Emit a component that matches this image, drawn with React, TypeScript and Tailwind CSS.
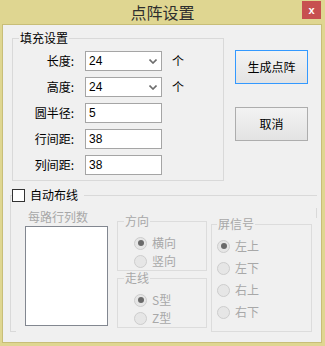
import React from "react";

const cjk = "font-['Noto_Sans_CJK_SC','Liberation_Sans',sans-serif]";

type RadioProps = {
  label: string;
  checked?: boolean;
};

function Radio({ label, checked }: RadioProps) {
  return (
    <div className="flex items-center h-[14px]">
      <span
        className="
          w-[13px]
          h-[13px]
          rounded-full
          border
          border-[#cdcdcd]
          bg-[#e6e6e6]
          flex
          items-center
          justify-center
        "
      >
        {checked && <span className="w-[6px] h-[6px] rounded-full bg-[#6a6a6a]" />}
      </span>
      <span className="ml-[5px] text-[12px] leading-[14px] text-[#a8a8a8]">{label}</span>
    </div>
  );
}

function Chevron() {
  return (
    <svg width="8" height="5" viewBox="0 0 8 5" className="mr-[4px]">
      <path d="M0.5 0.5 L4 4 L7.5 0.5" fill="none" stroke="#6d6d6d" strokeWidth="1.6" />
    </svg>
  );
}

type FieldRowProps = {
  label: string;
  value: string;
  select?: boolean;
};

function FieldRow({ label, value, select }: FieldRowProps) {
  return (
    <div className="flex items-center h-[20px]">
      <span className="w-[61px] text-right text-[12px] text-black">{label}</span>
      <div
        className="
          ml-[11px]
          w-[77px]
          h-[20px]
          border
          border-[#a5a5a5]
          bg-white
          flex
          items-center
          justify-between
        "
      >
        <span className="pl-[3px] text-[12px] font-['Liberation_Sans',sans-serif] text-black leading-none">
          {value}
        </span>
        {select && <Chevron />}
      </div>
      {select && <span className="ml-[10px] text-[12px] text-black">个</span>}
    </div>
  );
}

export default function App() {
  return (
    <div className={`w-[325px] h-[346px] bg-[#dfd691] flex flex-col ${cjk}`}>

      {/* TITLE BAR */}
      <div className="relative h-[24px] flex items-center justify-center">
        <span className="text-[16px] leading-none text-[#2e2e2e]">点阵设置</span>
        <div
          className="
            absolute
            right-[4px]
            top-[1px]
            w-[19px]
            h-[18px]
            bg-[#c75050]
            flex
            items-center
            justify-center
            text-white
            text-[11px]
            font-bold
            font-['Liberation_Sans',sans-serif]
            leading-none
          "
        >
          x
        </div>
      </div>

      {/* CLIENT AREA */}
      <div
        className="
          ml-[2px]
          w-[320px]
          h-[319px]
          border
          border-[#c8be78]
          bg-[#f0f0f0]
          pl-[7px]
          pt-[6px]
        "
      >

        {/* TOP SECTION */}
        <div className="flex items-start">
          <fieldset className="ml-[2px] w-[212px] border border-[#d9d9d9] pb-[5px]">
            <legend className="ml-[6px] px-[1px] text-[12px] leading-[14px] text-black">填充设置</legend>
            <div className="flex flex-col gap-[6px] pt-[6px]">
              <FieldRow label="长度:" value="24" select />
              <FieldRow label="高度:" value="24" select />
              <FieldRow label="圆半径:" value="5" />
              <FieldRow label="行间距:" value="38" />
              <FieldRow label="列间距:" value="38" />
            </div>
          </fieldset>

          <div className="ml-[11px] mt-[19px] flex flex-col gap-[23px]">
            <button
              className="
                w-[73px]
                h-[34px]
                border
                border-[#3399ff]
                bg-gradient-to-b
                from-[#f3f3f3]
                to-[#e3e3e3]
                text-[12px]
                text-black
              "
            >
              生成点阵
            </button>
            <button
              className="
                w-[73px]
                h-[34px]
                border
                border-[#adadad]
                bg-gradient-to-b
                from-[#f3f3f3]
                to-[#e3e3e3]
                text-[12px]
                text-black
              "
            >
              取消
            </button>
          </div>
        </div>

        {/* AUTO ROUTING */}
        <fieldset className="relative mt-[7px] w-[307px] h-[144px] border-l border-t border-[#d9d9d9]">
          <legend className="ml-[1px]">
            <div className="flex items-center gap-[5px] pr-[6px] h-[14px]">
              <span className="w-[13px] h-[13px] border border-[#333333] bg-white" />
              <span className="text-[12px] leading-[14px] text-black">自动布线</span>
            </div>
          </legend>
          <span className="absolute right-0 top-[6px] w-px h-[10px] bg-[#d9d9d9]" />
          <span className="absolute left-0 bottom-0 w-[5px] h-px bg-[#d9d9d9]" />

          <div className="flex items-start">

            {/* LIST */}
            <div className="ml-[14px] mt-[8px] flex flex-col">
              <span className="pl-[3px] text-[12px] leading-[14px] text-[#a8a8a8]">每路行列数</span>
              <div className="mt-[2px] w-[83px] h-[100px] border border-[#828790] bg-white" />
            </div>

            {/* DIRECTION + ROUTE */}
            <div className="ml-[9px] mt-[12px] flex flex-col">
              <fieldset className="w-[90px] border border-[#dcdcdc] pb-[2px]">
                <legend className="ml-[6px] px-[1px] text-[12px] leading-[14px] text-[#a8a8a8]">方向</legend>
                <div className="pl-[16px] pt-[8px] flex flex-col gap-[4px]">
                  <Radio label="横向" checked />
                  <Radio label="竖向" />
                </div>
              </fieldset>
              <fieldset className="w-[90px] border border-[#dcdcdc] pb-[2px]">
                <legend className="ml-[6px] px-[1px] text-[12px] leading-[14px] text-[#a8a8a8]">走线</legend>
                <div className="pl-[16px] pt-[8px] flex flex-col gap-[4px]">
                  <Radio label="S型" checked />
                  <Radio label="Z型" />
                </div>
              </fieldset>
            </div>

            {/* SCREEN SIGNAL */}
            <fieldset className="ml-[4px] mt-[15px] w-[101px] border border-[#dcdcdc] pb-[12px]">
              <legend className="ml-[5px] px-[1px] text-[12px] leading-[14px] text-[#a8a8a8]">屏信号</legend>
              <div className="pl-[5px] pt-[8px] flex flex-col gap-[8px]">
                <Radio label="左上" checked />
                <Radio label="左下" />
                <Radio label="右上" />
                <Radio label="右下" />
              </div>
            </fieldset>

          </div>
        </fieldset>

      </div>
    </div>
  );
}
